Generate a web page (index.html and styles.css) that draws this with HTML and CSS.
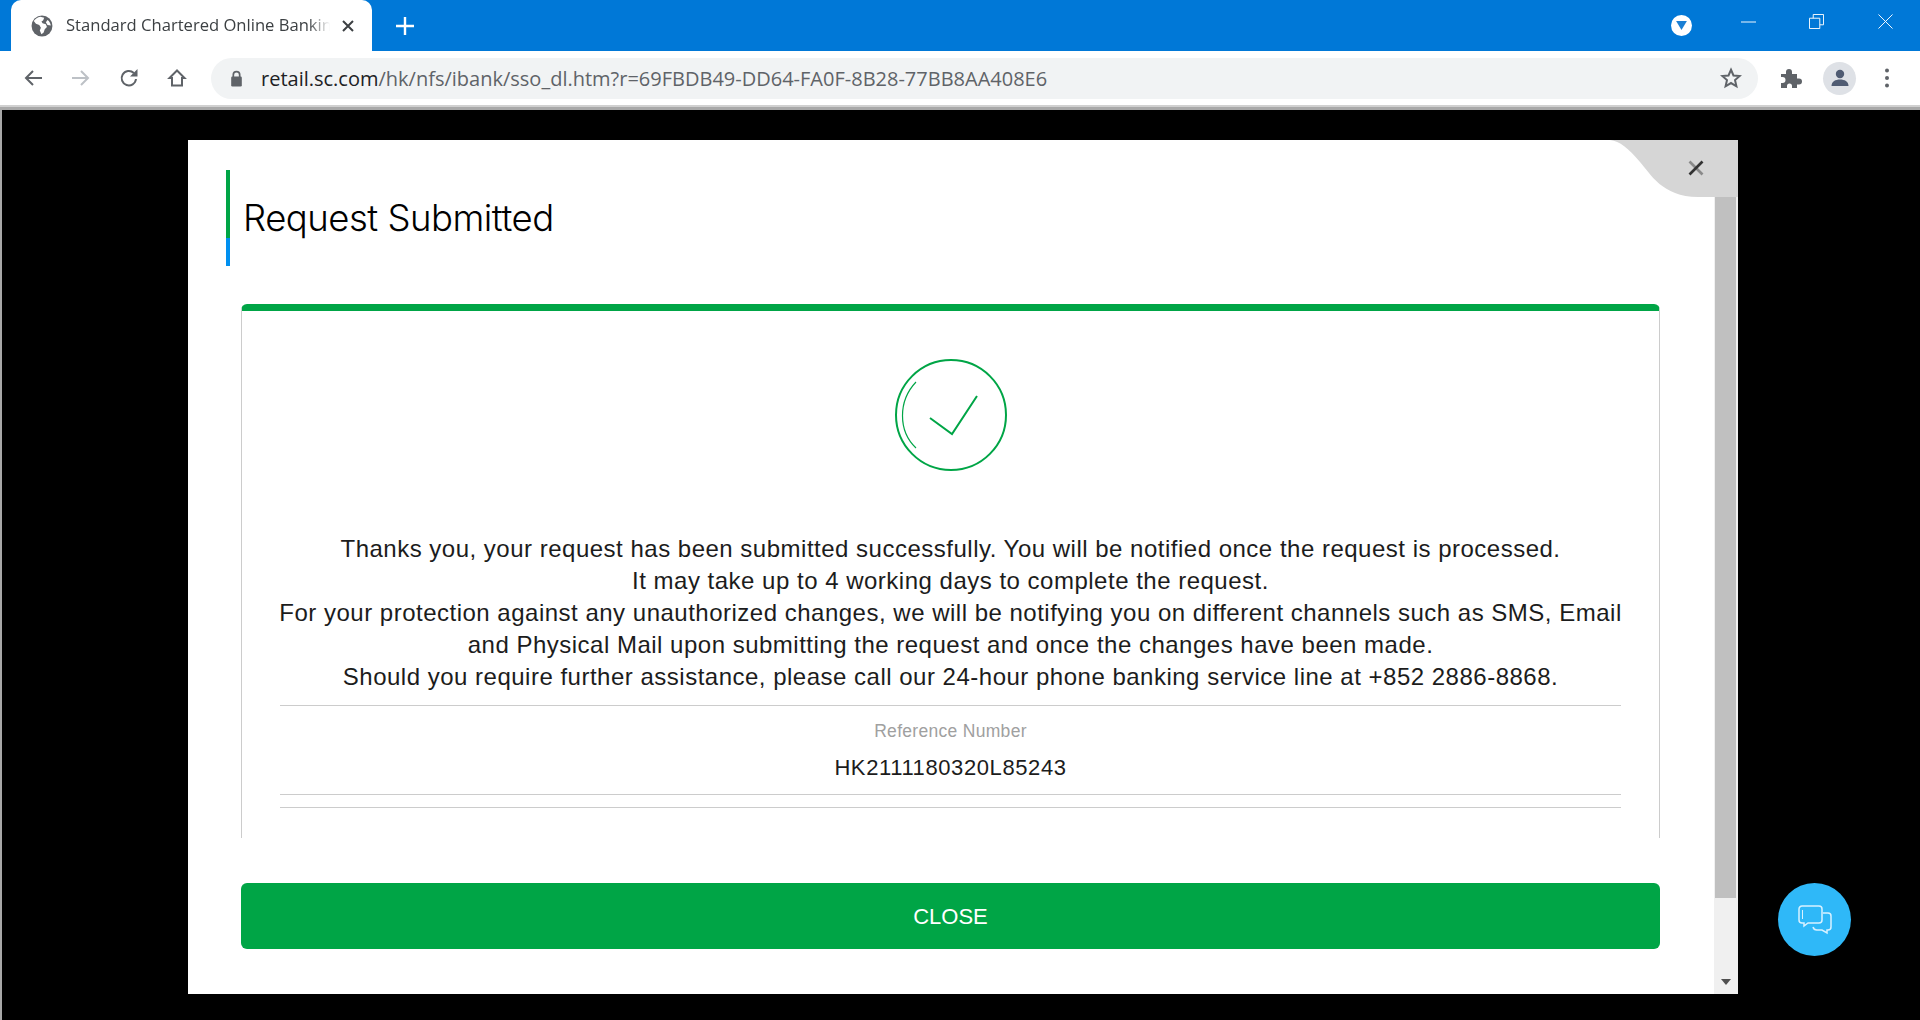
FILE: index.html
```html
<!DOCTYPE html>
<html lang="en">
<head>
<meta charset="utf-8">
<title>Standard Chartered Online Banking</title>
<link rel="stylesheet" href="styles.css">
</head>
<body>
<header class="tabstrip">
  <div class="tab">
    <svg class="favicon" viewBox="0 0 20 20"><circle cx="10" cy="10" r="9.500" fill="#5f6368"/><path d="M8.500 1.500C6 2 4 3.500 2.500 5.500l2 2.500 3 1 1.500 2.500-1 2.500 1.500 3.500 2-1.500 1-3 2-2-1-2.500-3-1-1-1.500 1.500-1 1-2.500zM15 4.500l-1.500 2 1.500 2.500 3 .5c-.2-2-1.300-3.800-3-5z" fill="#fff"/></svg>
    <span class="tab-title">Standard Chartered Online Banking</span>
    <svg class="tab-close" viewBox="0 0 12 12"><path d="M1 1l10 10M11 1L1 11" stroke="#3c4043" stroke-width="2" fill="none"/></svg>
  </div>
  <svg class="new-tab" viewBox="0 0 18 18"><path d="M9 0v18M0 9h18" stroke="#fff" stroke-width="2.400" fill="none"/></svg>
  <div class="window-controls">
    <span class="profile-dot"><svg viewBox="0 0 12 10"><path d="M0 0h12L6 10z" fill="#1a7fd4"/></svg></span>
    <svg class="win-min" viewBox="0 0 16 2"><path d="M0 1h16" stroke="#fff"/></svg>
    <svg class="win-restore" viewBox="0 0 16 16"><path d="M.5 4.500h11v11H.5zM4.500 4.500V.5h11v11h-4" stroke="#fff" fill="none"/></svg>
    <svg class="win-close" viewBox="0 0 16 16"><path d="M.5.5l15 15M15.500.5l-15 15" stroke="#fff" fill="none"/></svg>
  </div>
</header>
<nav class="toolbar">
  <svg class="tool" viewBox="0 0 20 20"><path d="M19 10H3M10 3L3 10l7 7" stroke="#5f6368" stroke-width="2" fill="none"/></svg>
  <svg class="tool" viewBox="0 0 20 20"><path d="M1 10h16M10 3l7 7-7 7" stroke="#bdc1c6" stroke-width="2" fill="none"/></svg>
  <svg class="tool" viewBox="0 0 20 20"><path d="M17 11a7.200 7.200 0 1 1-2.200-6" stroke="#5f6368" stroke-width="2" fill="none"/><path d="M18.500 1v7.500H11z" fill="#5f6368"/></svg>
  <svg class="tool" viewBox="0 0 20 20"><path d="M10 2.500L2.500 10H5v7.500h10V10h2.500z" stroke="#5f6368" stroke-width="2" fill="none"/></svg>
  <div class="omnibox">
    <svg class="lock" viewBox="0 0 12 16"><path d="M3 7V4.500a3 3 0 0 1 6 0V7" stroke="#5f6368" stroke-width="1.600" fill="none"/><rect x="1" y="6" width="10" height="9.500" rx="1.200" fill="#5f6368"/></svg>
    <span class="url"><span class="host">retail.sc.com</span>/hk/nfs/ibank/sso_dl.htm?r=69FBDB49-DD64-FA0F-8B28-77BB8AA408E6</span>
    <svg class="star" viewBox="0 0 24 24"><path d="M12 3l2.700 6.200 6.800.6-5.100 4.500 1.500 6.700L12 17.500 6.100 21l1.500-6.700-5.100-4.500 6.800-.6z" stroke="#5f6368" stroke-width="2.200" fill="none"/></svg>
  </div>
  <svg class="puzzle" viewBox="0 0 22 22"><path d="M1 7h5V5a3 3 0 0 1 6 0v2h5v4.500h2a3 3 0 0 1 0 6h-2V21h-5v-2a2.500 2.500 0 0 0-5 0v2H1v-5h1.500a3 3 0 0 0 0-6H1z" fill="#5f6368"/></svg>
  <span class="avatar"><svg viewBox="0 0 20 20"><circle cx="10" cy="6" r="4.200" fill="#4f5b72"/><path d="M1.500 18c0-4.500 4-6.500 8.500-6.500s8.500 2 8.500 6.500z" fill="#4f5b72"/></svg></span>
  <svg class="kebab" viewBox="0 0 6 20"><circle cx="3" cy="2.500" r="2" fill="#5f6368"/><circle cx="3" cy="10" r="2" fill="#5f6368"/><circle cx="3" cy="17.500" r="2" fill="#5f6368"/></svg>
</nav>
<main class="viewport">
  <section class="modal">
    <div class="corner">
      <svg class="corner-shape" viewBox="0 0 128 57" preserveAspectRatio="none"><path d="M0 0C10 1 18 8 30 22 40 33 52 57 88 57H128V0z" fill="#d6d6d6"/></svg>
      <svg class="corner-x" viewBox="0 0 16 16"><path d="M1.500 1.500l13 13" stroke="#8a8a8a" stroke-width="2.600"/><path d="M1.500 14.500L14.500 1.500" stroke="#333" stroke-width="2.600"/></svg>
    </div>
    <div class="scrollbar">
      <div class="thumb"></div>
      <svg class="arrow" viewBox="0 0 10 6"><path d="M0 0h10L5 6z" fill="#505050"/></svg>
    </div>
    <div class="content">
      <h1 class="title">Request Submitted</h1>
      <div class="card">
        <svg class="check" viewBox="0 0 112 112">
          <circle cx="56" cy="56" r="55" fill="none" stroke="#00a546" stroke-width="2"/>
          <path d="M21 23C3 42 3 72 21 89" fill="none" stroke="#00a546" stroke-width="1.200"/>
          <path d="M35 59l22 16 25-38" fill="none" stroke="#00a546" stroke-width="2"/>
        </svg>
        <p class="message">Thanks you, your request has been submitted successfully. You will be notified once the request is processed.<br>It may take up to 4 working days to complete the request.<br>For your protection against any unauthorized changes, we will be notifying you on different channels such as SMS, Email and Physical Mail upon submitting the request and once the changes have been made.<br>Should you require further assistance, please call our 24-hour phone banking service line at +852 2886-8868.</p>
        <div class="reference">
          <div class="ref-label">Reference Number</div>
          <div class="ref-value">HK2111180320L85243</div>
        </div>
        <hr class="rule">
      </div>
      <button class="close-btn">CLOSE</button>
    </div>
  </section>
  <div class="chat">
    <svg viewBox="0 0 34 30"><path d="M4 1h17a3 3 0 0 1 3 3v11a3 3 0 0 1-3 3H10l-4 3v-3H4a3 3 0 0 1-3-3V4a3 3 0 0 1 3-3z" fill="none" stroke="#d8f1ff" stroke-width="1.500"/><path d="M25 8h5a3 3 0 0 1 3 3v11a3 3 0 0 1-3 3h-1v3l-5-3h-5a4 4 0 0 1-4-3" fill="none" stroke="#d8f1ff" stroke-width="1.500"/><path d="M4.500 5v9" stroke="#d8f1ff"/></svg>
  </div>
</main>
</body>
</html>
```
FILE: styles.css
```css
* { box-sizing: border-box; }
html, body { margin: 0; height: 100%; }
body { display: flex; flex-direction: column; height: 1020px; overflow: hidden; font-family: "Liberation Sans", Arial, sans-serif; background: #000; }

.tabstrip { flex: none; height: 51px; background: #0078d7; display: flex; align-items: flex-end; padding-left: 11px; }
.tab { width: 361px; height: 51px; background: #fff; border-radius: 10px 10px 0 0; display: flex; align-items: center; padding: 0 18px 0 20px; }
.favicon { width: 22px; height: 22px; flex: none; }
.tab-title { flex: 1; min-width: 0; margin: 0 0 2px 13px; font: 16.600px/26px "Open Sans", "Liberation Sans", sans-serif; color: #3c4043; white-space: nowrap; overflow: hidden; -webkit-mask-image: linear-gradient(to left, transparent 0, #000 22px); mask-image: linear-gradient(to left, transparent 0, #000 22px); }
.tab-close { width: 12px; height: 12px; flex: none; margin-left: 12px; }
.new-tab { width: 18px; height: 18px; margin: 0 0 16px 24px; }
.window-controls { margin-left: auto; height: 51px; display: flex; align-items: center; padding: 0 27px 8px 0; }
.profile-dot { width: 21px; height: 21px; border-radius: 50%; background: #fff; display: flex; align-items: center; justify-content: center; margin-top: 7px; }
.profile-dot svg { width: 11px; height: 9px; }
.win-min { width: 15px; height: 2px; margin-left: 49px; }
.win-restore { width: 15px; height: 15px; margin-left: 53px; }
.win-close { width: 15px; height: 15px; margin-left: 54px; }

.toolbar { flex: none; height: 56px; background: #fff; border-bottom: 2px solid #d0d0d0; display: flex; align-items: center; padding: 0 0 0 23px; }
.tool { width: 20px; height: 20px; flex: none; margin-right: 28px; }
.omnibox { width: 1547px; height: 41px; margin-left: -4px; background: #f1f3f4; border-radius: 21px; display: flex; align-items: center; padding: 0 16px 0 19px; }
.lock { width: 13px; height: 17px; flex: none; }
.url { flex: 1; margin-left: 18px; font: 20px "Open Sans", "Liberation Sans", sans-serif; color: #5f6368; white-space: nowrap; }
.host { color: #202124; }
.star { width: 22px; height: 22px; flex: none; }
.puzzle { width: 22px; height: 22px; flex: none; margin-left: 22px; }
.avatar { width: 33px; height: 33px; flex: none; border-radius: 50%; background: #dee1e6; margin-left: 21px; display: flex; align-items: center; justify-content: center; }
.avatar svg { width: 20px; height: 20px; }
.kebab { width: 6px; height: 20px; flex: none; margin-left: 28px; }

.viewport { flex: 1; position: relative; background: #000; border-left: 2px solid #a8a8a8; border-top: 3px solid #a8a8a8; padding: 30px 0 0 186px; }
.modal { width: 1550px; height: 854px; background: #fff; position: relative; }
.corner { position: absolute; top: 0; right: 0; width: 128px; height: 57px; }
.corner-shape { width: 100%; height: 100%; display: block; }
.corner-x { position: absolute; top: 20px; right: 34px; width: 16px; height: 16px; }
.scrollbar { position: absolute; top: 57px; right: 0; bottom: 0; width: 24px; background: #f0f0f0; padding: 0 2px 0 1px; }
.thumb { height: 701px; background: #c0c0c0; }
.arrow { position: absolute; bottom: 9px; left: 7px; width: 10px; height: 6px; }

.content { padding: 30px 78px 0 53px; }
.title { margin: 0 0 38px -15px; height: 96px; padding-left: 13px; border-left: 4px solid; border-image: linear-gradient(#00a546 0 70%, #0090f0 70% 100%) 1; font-family: Inter, "Liberation Sans", sans-serif; font-size: 36.500px; font-weight: 300; line-height: 96px; color: #000; letter-spacing: -.5px; }
.card { height: 534px; border: 1px solid #ccc; border-bottom: 0; border-top: 7px solid #00a546; border-radius: 6px 6px 0 0; padding: 48px 38px 0; display: flex; flex-direction: column; align-items: stretch; }
.check { width: 112px; height: 112px; align-self: center; flex: none; }
.message { margin: 62px -6px 0; font-size: 24px; letter-spacing: .5px; line-height: 32px; text-align: center; color: #1c1c1c; }
.reference { margin-top: 12px; border-top: 1px solid #ccc; border-bottom: 1px solid #ccc; height: 90px; text-align: center; }
.ref-label { margin-top: 13px; font-size: 17.500px; letter-spacing: .3px; line-height: 24px; color: #a0a0a0; }
.ref-value { margin-top: 12px; font-size: 22px; letter-spacing: .6px; line-height: 26px; color: #1c1c1c; }
.rule { margin: 12px 0 0; border: 0; border-top: 1px solid #ccc; }
.close-btn { display: block; width: 100%; height: 66px; margin-top: 45px; padding: 2px 0 0; border: 0; border-radius: 6px; background: #00a546; color: #fff; font: 22px "Liberation Sans", sans-serif; cursor: pointer; }

.chat { position: absolute; left: 1776px; top: 773px; width: 73px; height: 73px; border-radius: 50%; background: #2fb8f8; display: flex; align-items: center; justify-content: center; }
.chat svg { width: 34px; height: 30px; }
```
